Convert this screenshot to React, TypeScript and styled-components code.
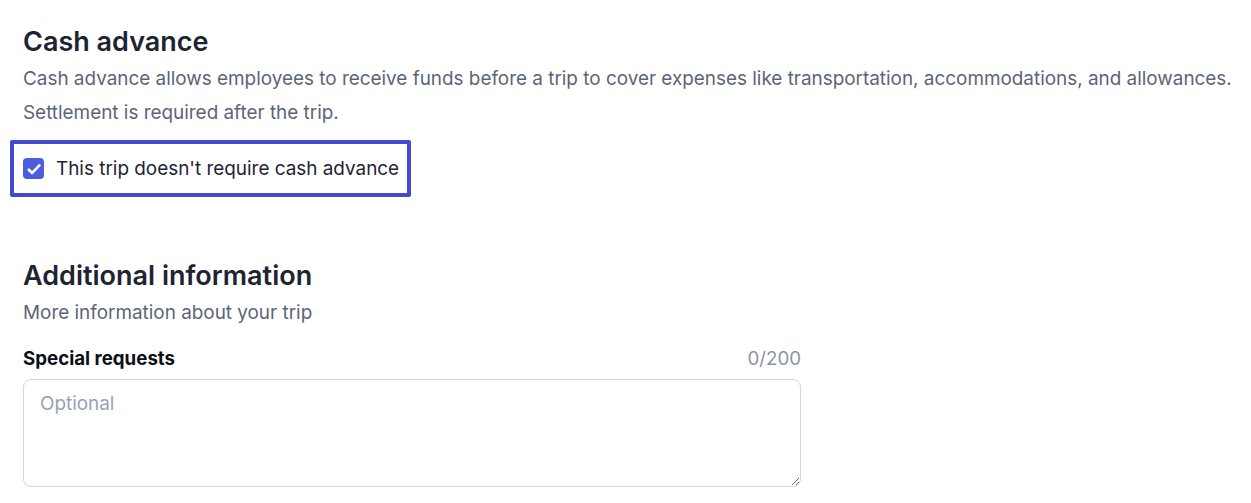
import styled, { createGlobalStyle } from "styled-components";

const GlobalStyle = createGlobalStyle`
    body {
        margin: 0;
        background: #ffffff;
        font-family: Inter, "Noto Sans", sans-serif;
    }
`

function App() {
    return (
        <Page>
            <GlobalStyle />
            <Section>
                <Title>Cash advance</Title>
                <Description>
                    Cash advance allows employees to receive funds before a trip to cover expenses like transportation, accommodations, and allowances.
                    <br />
                    Settlement is required after the trip.
                </Description>
                <FocusRing>
                    <CheckLabel>
                        <CheckBox>
                            <svg width="16" height="16" viewBox="0 0 16 16" fill="none">
                                <path d="M2.8 8.8l3.4 3.1L13.4 4.4" stroke="#ffffff" strokeWidth="2.7" strokeLinecap="round" strokeLinejoin="round" />
                            </svg>
                        </CheckBox>
                        This trip doesn't require cash advance
                    </CheckLabel>
                </FocusRing>
            </Section>

            <Section spaced>
                <Title>Additional information</Title>
                <SubText>More information about your trip</SubText>
                <Field>
                    <FieldHeader>
                        <FieldLabel>Special requests</FieldLabel>
                        <Counter>0/200</Counter>
                    </FieldHeader>
                    <TextArea placeholder="Optional" />
                </Field>
            </Section>
        </Page>
    );
}

const Page = styled.div`
    padding: 24px 0 0 23px;
    color: #1d2433;
`

const Section = styled.section<{ spaced?: boolean }>`
    display: flex;
    flex-direction: column;
    align-items: flex-start;
    margin-top: ${(props) => props.spaced ? "61px" : "0"};
`

const Title = styled.h2`
    margin: 0;
    font-size: 27px;
    font-weight: 600;
    line-height: 36px;
    color: #1d2433;
`

const Description = styled.p`
    margin: 2px 0 0 0;
    font-size: 18.9px;
    line-height: 34px;
    white-space: nowrap;
    color: #5b6577;
`

const SubText = styled(Description)`
    margin-top: 2px;
`

const FocusRing = styled.div`
    margin: 10px 0 0 -13px;
    padding: 11px 8px 11px 9px;
    border: 4px solid #4349d0;
    border-radius: 2px;
`

const CheckLabel = styled.label`
    display: flex;
    align-items: center;
    gap: 12px;
    font-size: 18.9px;
    line-height: 27px;
    color: #1d2433;
`

const CheckBox = styled.span`
    display: flex;
    align-items: center;
    justify-content: center;
    width: 21px;
    height: 21px;
    border-radius: 4px;
    background: #4b5ee0;
`

const Field = styled.div`
    margin-top: 17px;
    width: 778px;
`

const FieldHeader = styled.div`
    display: flex;
    justify-content: space-between;
    align-items: baseline;
    margin-bottom: 9px;
`

const FieldLabel = styled.span`
    font-size: 18.7px;
    font-weight: 650;
    color: #0b0f17;
`

const Counter = styled.span`
    font-size: 18.7px;
    color: #8a94a6;
`

const TextArea = styled.textarea`
    display: block;
    box-sizing: border-box;
    width: 100%;
    height: 108px;
    padding: 12px 16px;
    border: 1px solid #d3d7de;
    border-radius: 8px;
    font-family: Inter, "Noto Sans", sans-serif;
    font-size: 18.9px;
    color: #1d2433;

    &::placeholder {
        color: #98a2b3;
    }
`

export default App;
